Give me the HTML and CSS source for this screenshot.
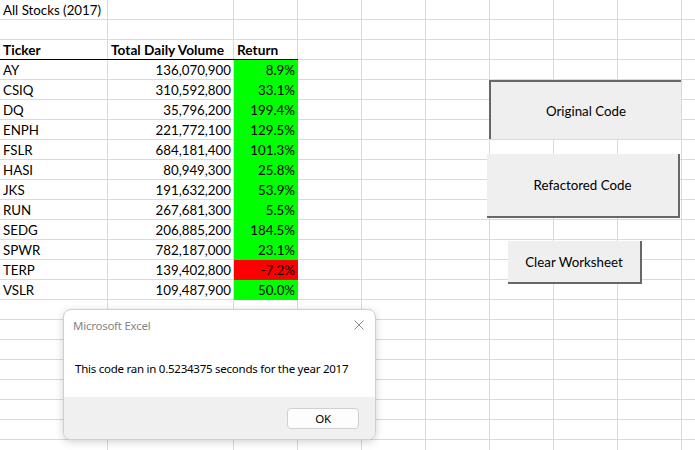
FILE: index.html
```html
<!DOCTYPE html>
<html lang="en">
<head>
<meta charset="utf-8">
<title>All Stocks (2017)</title>
<link rel="stylesheet" href="styles.css">
</head>
<body>
<div class="sheet">
  <div class="cells">
    <div class="c">All Stocks (2017)</div><div class="c"></div><div class="c"></div>
    <div class="c"></div><div class="c"></div><div class="c"></div>
    <div class="c hd">Ticker</div><div class="c hd">Total Daily Volume</div><div class="c hd">Return</div>
    <div class="c">AY</div><div class="c num">136,070,900</div><div class="c num up">8.9%</div>
    <div class="c">CSIQ</div><div class="c num">310,592,800</div><div class="c num up">33.1%</div>
    <div class="c">DQ</div><div class="c num">35,796,200</div><div class="c num up">199.4%</div>
    <div class="c">ENPH</div><div class="c num">221,772,100</div><div class="c num up">129.5%</div>
    <div class="c">FSLR</div><div class="c num">684,181,400</div><div class="c num up">101.3%</div>
    <div class="c">HASI</div><div class="c num">80,949,300</div><div class="c num up">25.8%</div>
    <div class="c">JKS</div><div class="c num">191,632,200</div><div class="c num up">53.9%</div>
    <div class="c">RUN</div><div class="c num">267,681,300</div><div class="c num up">5.5%</div>
    <div class="c">SEDG</div><div class="c num">206,885,200</div><div class="c num up">184.5%</div>
    <div class="c">SPWR</div><div class="c num">782,187,000</div><div class="c num up">23.1%</div>
    <div class="c">TERP</div><div class="c num">139,402,800</div><div class="c num down">-7.2%</div>
    <div class="c">VSLR</div><div class="c num">109,487,900</div><div class="c num up">50.0%</div>
  </div>

  <div class="shape btn-original pressed">Original Code</div>
  <div class="shape btn-refactored raised">Refactored Code</div>
  <div class="shape btn-clear raised">Clear Worksheet</div>

  <div class="dialog">
    <div class="dlg-head">
      <span class="dlg-title">Microsoft Excel</span>
      <svg class="dlg-close" width="10" height="10" viewBox="0 0 10 10"><path d="M0.5 0.5L9.5 9.5M9.5 0.5L0.5 9.5" stroke="#8a8a8a" stroke-width="1" fill="none"/></svg>
    </div>
    <div class="dlg-body">This code ran in 0.5234375 seconds for the year 2017</div>
    <div class="dlg-foot">
      <div class="dlg-ok">OK</div>
    </div>
  </div>
</div>
</body>
</html>
```

FILE: styles.css
```css
* { box-sizing: border-box; }
html, body { margin: 0; padding: 0; background: #fff; }

.sheet {
  position: relative;
  width: 695px;
  height: 450px;
  overflow: hidden;
  background-color: #fff;
  background-image:
    linear-gradient(#dadada, #dadada),
    linear-gradient(#dadada, #dadada),
    repeating-linear-gradient(to right, transparent 0 63px, #dadada 63px 64px),
    repeating-linear-gradient(to bottom, transparent 0 19px, #dadada 19px 20px);
  background-size: 1px 100%, 1px 100%, calc(100% - 234px) 100%, 100% 100%;
  background-position: 107px 0, 233px 0, 234px 0, 0 0;
  background-repeat: no-repeat;
  font-family: Lato, "Liberation Sans", sans-serif;
  color: #000;
}

.cells {
  display: grid;
  grid-template-columns: 108px 126px 64px;
  grid-auto-rows: 20px;
  font-size: 13.3px;
  line-height: 20px;
}

.c {
  padding: 0 3px;
  white-space: nowrap;
}

.hd {
  font-weight: bold;
  font-size: 13.7px;
  box-shadow: inset 0 -1px 0 #000;
}

.num { text-align: right; padding-right: 3px; }
.up { background: #00ff00; }
.down { background: #ff0000; }

.shape {
  position: absolute;
  display: flex;
  align-items: center;
  justify-content: center;
  background: #efefef;
  font-size: 13.3px;
  color: #000;
}
.pressed {
  border-top: 2px solid #676767;
  border-left: 2px solid #676767;
}
.raised {
  border-right: 2px solid #676767;
  border-bottom: 2px solid #676767;
}
.btn-original { left: 489px; top: 80px; width: 192px; height: 59px; }
.btn-refactored { left: 487px; top: 154px; width: 193px; height: 64px; }
.btn-clear { left: 508px; top: 241px; width: 134px; height: 43px; }

.dialog {
  position: absolute;
  left: 63px;
  top: 309px;
  width: 313px;
  height: 131px;
  display: flex;
  flex-direction: column;
  background: #fff;
  border: 1px solid #cfcfcf;
  border-radius: 8px;
  overflow: hidden;
  box-shadow: 0 2px 8px rgba(0, 0, 0, 0.18);
  font-family: "Noto Sans", "Open Sans", sans-serif;
  font-size: 11.5px;
  letter-spacing: -0.25px;
  white-space: nowrap;
}
.dlg-head {
  display: flex;
  align-items: center;
  justify-content: space-between;
  height: 30px;
  padding: 0 11px 0 9px;
}
.dlg-title { color: #858585; }
.dlg-body {
  flex: 1;
  display: flex;
  align-items: center;
  padding: 0 11px;
  color: #000;
}
.dlg-foot {
  height: 42px;
  background: #f0f0f0;
  display: flex;
  align-items: center;
  justify-content: flex-end;
  padding: 0 16px 0 0;
}
.dlg-ok {
  width: 72px;
  height: 21px;
  display: flex;
  align-items: center;
  justify-content: center;
  background: #fdfdfd;
  border: 1px solid #d0d0d0;
  border-radius: 4px;
  color: #000;
}
```
